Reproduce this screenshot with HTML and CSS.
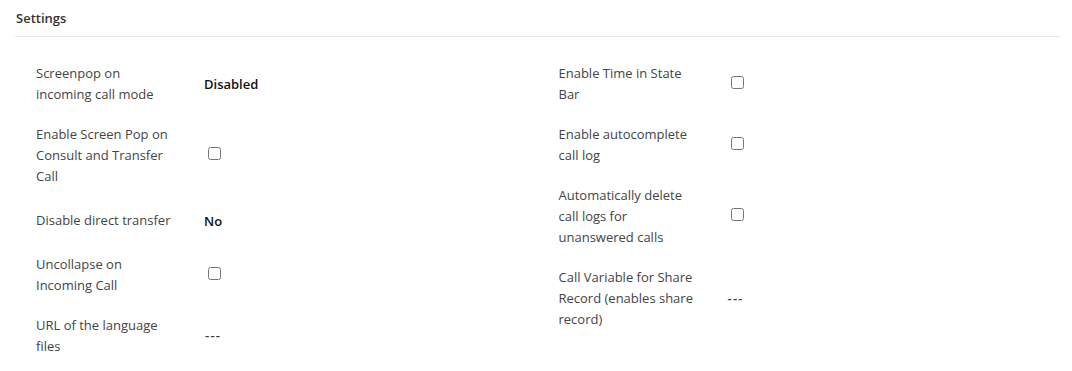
FILE: index.html
```html
<!DOCTYPE html>
<html>
<head>
<meta charset="utf-8">
<link rel="stylesheet" href="styles.css">
</head>
<body>
<div class="panel">
  <div class="header">Settings</div>
  <div class="columns">
    <div class="col">
      <div class="row"><div class="label">Screenpop on incoming call mode</div><div class="value strong">Disabled</div></div>
      <div class="row"><div class="label">Enable Screen Pop on Consult and Transfer Call</div><div class="value"><input type="checkbox"></div></div>
      <div class="row"><div class="label">Disable direct transfer</div><div class="value strong">No</div></div>
      <div class="row"><div class="label">Uncollapse on Incoming Call</div><div class="value"><input type="checkbox"></div></div>
      <div class="row"><div class="label">URL of the language files</div><div class="value empty">---</div></div>
    </div>
    <div class="col">
      <div class="row"><div class="label">Enable Time in State Bar</div><div class="value"><input type="checkbox"></div></div>
      <div class="row"><div class="label">Enable autocomplete call log</div><div class="value"><input type="checkbox"></div></div>
      <div class="row"><div class="label">Automatically delete call logs for unanswered calls</div><div class="value"><input type="checkbox"></div></div>
      <div class="row"><div class="label">Call Variable for Share Record (enables share record)</div><div class="value empty">---</div></div>
    </div>
  </div>
</div>
</body>
</html>
```

FILE: styles.css
```css
html, body {
  margin: 0;
  padding: 0;
  background: #fff;
}
body {
  font-family: "Open Sans", "Noto Sans", sans-serif;
  font-size: 13px;
  color: #444;
}
.panel {
  padding: 0 12px 0 15px;
}
.header {
  padding: 8px 1px 7px;
  line-height: 21px;
  font-weight: 600;
  color: #333;
  border-bottom: 1px solid #e6e6e6;
}
.columns {
  display: grid;
  grid-template-columns: 1fr 1fr;
  margin-top: 16px;
}
.col {
  padding-left: 21px;
  display: flex;
  flex-direction: column;
}
.row {
  display: flex;
  align-items: center;
  padding: 9.5px 0;
  min-height: 29px;
  line-height: 21px;
}
.label {
  width: 138px;
  margin-right: 30px;
  flex: none;
}
.value {
  color: #333;
}
.value.strong {
  font-weight: 600;
  color: #111;
  padding-top: 2px;
}
.value.empty {
  letter-spacing: 1.2px;
  padding-left: 1px;
  font-weight: 600;
  color: #3a3a3a;
}
.value input {
  margin: 3px 3px 3px 4px;
  width: 13px;
  height: 13px;
}
```
